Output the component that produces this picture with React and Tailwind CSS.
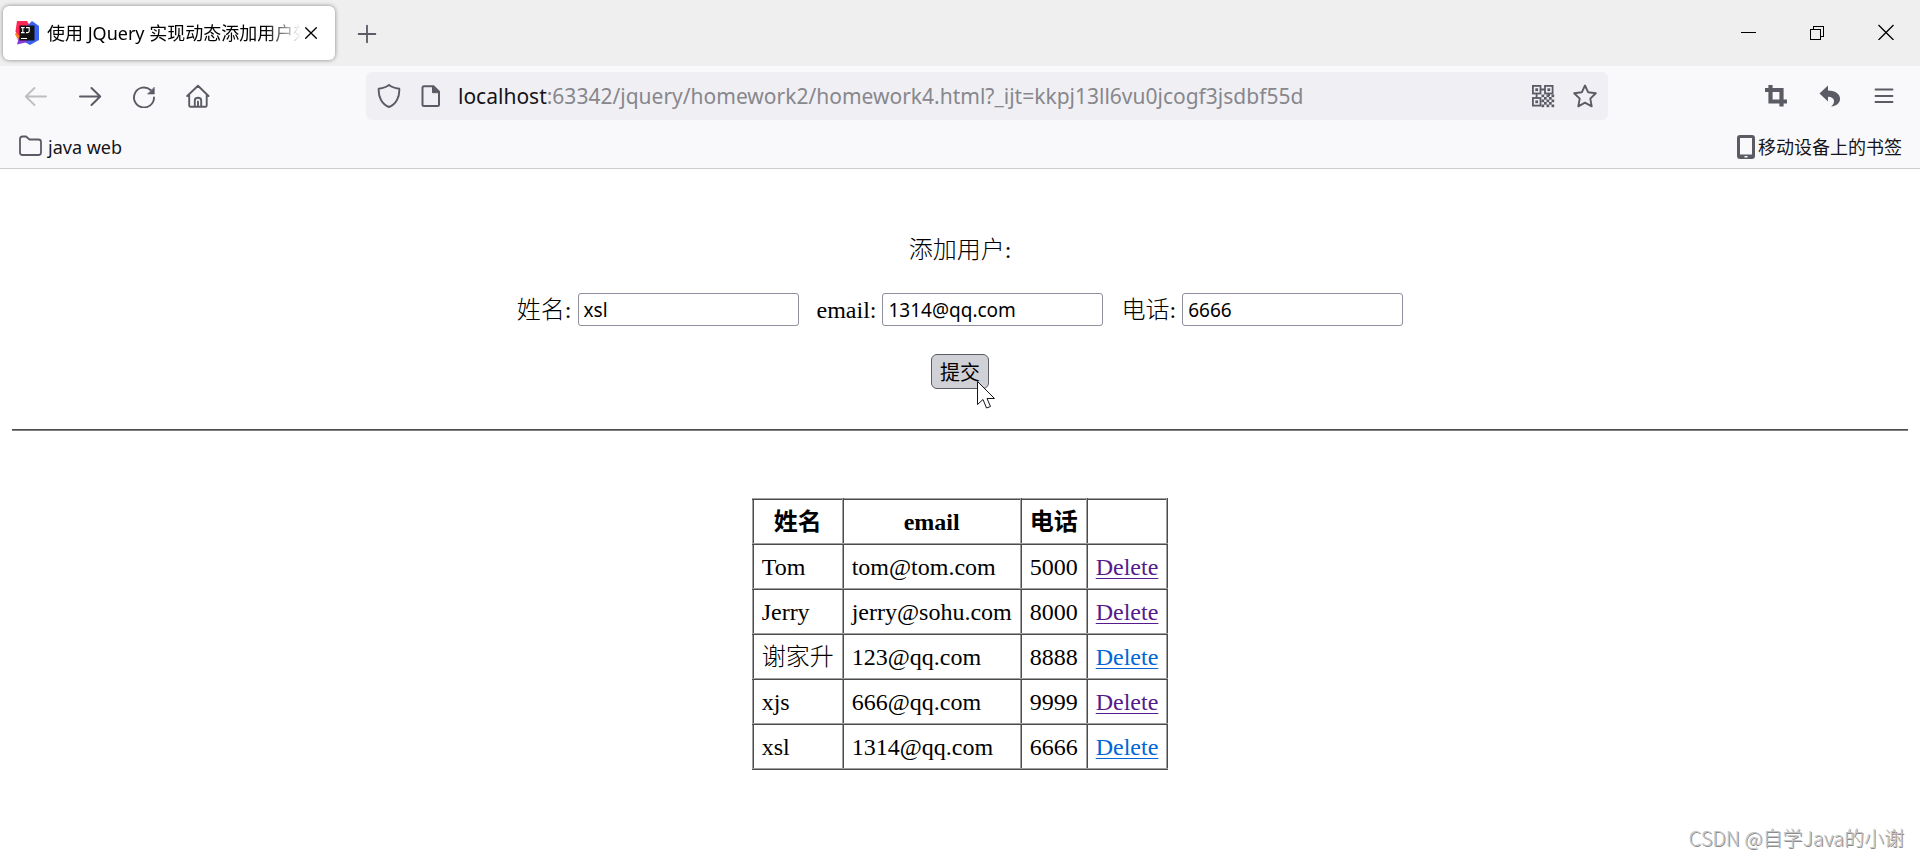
import React from "react";

const USERS = [
  { name: "Tom", email: "tom@tom.com", phone: "5000", visited: true },
  { name: "Jerry", email: "jerry@sohu.com", phone: "8000", visited: true },
  { name: "谢家升", email: "123@qq.com", phone: "8888", visited: false },
  { name: "xjs", email: "666@qq.com", phone: "9999", visited: true },
  { name: "xsl", email: "1314@qq.com", phone: "6666", visited: false },
];

function IdeaLogo() {
  return (
    <svg className="h-6 w-6 shrink-0" viewBox="0 0 24 24" aria-hidden="true">
      <path d="M0 13 4 8 8 16 3 19Z" fill="#fc801d" />
      <path d="M2 0H12L15 5 12 14 3 14 0.5 10.5Z" fill="#fe2857" />
      <path d="M13 4 17 0 24 5V19L15 24 8 20Z" fill="#3b63f3" />
      <path d="M4 16 14 14 13 21 2 23.5Z" fill="#8a3bd8" />
      <rect x="4.5" y="4.5" width="15" height="15" fill="#111" />
      <path d="M6 6.6H9.6M6 11.6H9.6M7.8 6.6V11.6M11 6.6H14.2V10Q14.2 11.6 12.6 11.6H11" fill="none" stroke="#fff" strokeWidth="1.1" />
      <path d="M6 17.5H12" stroke="#fff" strokeWidth="1" />
    </svg>
  );
}

function Stroke({ d, className = "h-6 w-6", width = 1.6, children }) {
  return (
    <svg className={`${className} shrink-0`} viewBox="0 0 24 24" fill="none" stroke="currentColor" strokeWidth={width} strokeLinecap="round" strokeLinejoin="round" aria-hidden="true">
      <path d={d} />
      {children}
    </svg>
  );
}

function QrIcon() {
  const cells = [];
  for (let r = 0; r < 5; r++) {
    for (let c = 0; c < 5; c++) {
      if ((r + c) % 2 === 0) cells.push(<rect key={`${r}-${c}`} x={10.5 + c * 2.5} y={10.5 + r * 2.5} width="2.7" height="2.7" />);
    }
  }
  return (
    <svg className="h-6 w-6 shrink-0" viewBox="0 0 24 24" fill="currentColor" aria-hidden="true">
      <g fill="none" stroke="currentColor" strokeWidth="1.8">
        <rect x="1.9" y="1.9" width="7.6" height="7.6" />
        <rect x="14" y="1.9" width="7.6" height="7.6" />
        <rect x="1.9" y="14" width="7.6" height="7.6" />
        <path d="M9.4 5.5H14M5.6 9.4V14M18 9.4V12" />
      </g>
      <rect x="4.3" y="4.3" width="2.8" height="2.8" />
      <rect x="16.4" y="4.3" width="2.8" height="2.8" />
      <rect x="4.3" y="16.4" width="2.8" height="2.8" />
      {cells}
    </svg>
  );
}

function TitleBar() {
  return (
    <header className="flex h-[66px] items-start justify-between bg-[#efefef]">
      <div className="flex items-start pt-1.5 pl-[3px]">
        <div className="flex h-[54px] w-[332px] items-center rounded-md bg-white pr-3.5 pl-3 shadow-[0_0_4px_rgba(0,0,0,0.45)]">
          <IdeaLogo />
          <span className="ml-2 flex-1 overflow-hidden whitespace-nowrap text-lg text-black [mask-image:linear-gradient(to_left,transparent,black_36px)]">
            使用 JQuery 实现动态添加用户效果
          </span>
          <button aria-label="关闭标签页" className="flex h-6 w-5 items-center justify-center text-black">
            <Stroke className="h-4 w-4" width={2} d="M4 4 20 20M20 4 4 20" />
          </button>
        </div>
        <button aria-label="新建标签页" className="flex h-14 w-16 items-center justify-center text-[#5b5b66]">
          <Stroke className="h-5 w-5" width={2.2} d="M12 2V22M2 12H22" />
        </button>
      </div>
      <div className="flex h-16 text-black">
        <button aria-label="最小化" className="flex w-[69px] items-center justify-center">
          <svg className="h-4 w-4" viewBox="0 0 16 16" shapeRendering="crispEdges"><path d="M1 8.5H16" stroke="currentColor" /></svg>
        </button>
        <button aria-label="还原" className="flex w-[69px] items-center justify-center">
          <svg className="h-4 w-4" viewBox="0 0 16 16" fill="none" stroke="currentColor" shapeRendering="crispEdges">
            <rect x="1.5" y="5.5" width="10" height="10" />
            <path d="M4.5 5.5V2.5H14.5V12.5H11.5" />
          </svg>
        </button>
        <button aria-label="关闭" className="flex w-[69px] items-center justify-center">
          <svg className="h-4 w-4" viewBox="0 0 16 16"><path d="M.5 1 15.5 16M15.5 1 .5 16" stroke="currentColor" strokeWidth="1.3" /></svg>
        </button>
      </div>
    </header>
  );
}

const NAV_BUTTON = "flex h-12 w-[54px] items-center justify-center";

function NavBar() {
  return (
    <div className="flex h-[60px] items-center text-[#5b5b66]">
      <div className="flex w-[366px] pl-[9px]">
        <button aria-label="后退" disabled className={`${NAV_BUTTON} text-[#bdbdc2]`}>
          <Stroke width={1.8} d="M22 12.5H2M10.5 4 1.8 12.5 10.5 21" />
        </button>
        <button aria-label="前进" className={NAV_BUTTON}>
          <Stroke width={2} d="M2 12.5H22M13.5 4 22.2 12.5 13.5 21" />
        </button>
        <button aria-label="刷新" className={NAV_BUTTON}>
          <Stroke width={1.9} d="M22 13.5A10 10 0 1 1 18.6 6">
            <path d="M22.3 3.5V10H15.8Z" fill="currentColor" strokeWidth="0.6" />
          </Stroke>
        </button>
        <button aria-label="主页" className={NAV_BUTTON}>
          <Stroke width={1.9} d="M1.2 12 12 1.8 22.5 12M3.2 10.5V21.5Q3.2 22.8 4.7 22.8H19.2Q20.7 22.8 20.7 21.5V10.5M8.8 22.5V16.5Q8.8 13.8 12 13.8Q15.2 13.8 15.2 16.5V22.5M12 17.5V22.5" />
        </button>
      </div>
      <div className="flex h-12 flex-1 items-center rounded-md bg-[#f0f0f4] pr-2.5 pl-[11px]">
        <Stroke width={1.9} d="M12 .9C9.5 3.3 5.5 4.3 1.7 4.8C1.2 13 5 20.5 12 23C19 20.5 22.8 13 22.3 4.8C18.5 4.3 14.5 3.3 12 .9Z" />
        <svg className="ml-[18px] h-6 w-6" viewBox="0 0 24 24" fill="none" stroke="currentColor" strokeWidth="2" aria-hidden="true">
          <path d="M5 2.2H14.5L20 7.7V20.5Q20 22 18.5 22H5Q3.5 22 3.5 20.5V3.7Q3.5 2.2 5 2.2Z" />
          <path d="M13.5 2.2V8.7H20Z" fill="currentColor" strokeWidth="1" />
        </svg>
        <p className="ml-[15px] flex-1 text-[21px] leading-8 whitespace-nowrap text-[#87878c]">
          <span className="text-[#15141a]">localhost</span>:63342/jquery/homework2/homework4.html?_ijt=kkpj13ll6vu0jcogf3jsdbf55d
        </p>
        <button aria-label="二维码" className="flex w-[59px] justify-center"><QrIcon /></button>
        <button aria-label="添加书签" className="flex w-[26px] justify-center">
          <Stroke width={1.9} d="M12 1.5 15.2 8.3 22.8 9.2 17.3 14.6 18.7 22.3 12 18.6 5.3 22.3 6.7 14.6 1.2 9.2 8.8 8.3Z" />
        </button>
      </div>
      <div className="flex w-[312px] justify-end pr-[9px]">
        <button aria-label="截图" className={NAV_BUTTON}>
          <svg className="h-6 w-6" viewBox="0 0 24 24" fill="none" stroke="currentColor" strokeWidth="4.2"><path d="M6.500 1V17.500H23M1 6H17.500V22.500" /></svg>
        </button>
        <button aria-label="撤销" className={NAV_BUTTON}>
          <svg className="h-6 w-6" viewBox="0 0 24 24" fill="currentColor"><path d="M1.5 9.5 10 1.5V6.5C18 6.5 22.5 10.5 22 15.5C21.7 19 18.5 22 13 22.5C17.5 19.5 17.5 13 10 12.8V17.5Z" /></svg>
        </button>
        <button aria-label="菜单" className={NAV_BUTTON}>
          <Stroke width={1.9} d="M3.5 5.5H20.5M3.5 12H20.5M3.5 18H20.5" />
        </button>
      </div>
    </div>
  );
}

function BookmarkBar() {
  return (
    <nav className="flex h-[42px] items-start justify-between px-[18px] text-lg leading-[42px] text-[#15141a]">
      <a href="#java-web" className="flex items-center gap-1.5">
        <span className="text-[#5b5b66]">
          <Stroke width={1.8} d="M2 4Q2 1.5 4.5 1.5H8L11.5 4.5H20.5Q23 4.5 23 7V17.5Q23 20 20.5 20H4.5Q2 20 2 17.5Z" />
        </span>
        java web
      </a>
      <a href="#mobile" className="flex items-center">
        <svg className="h-6 w-[22px] text-[#5b5b66]" viewBox="0 0 22 24" fill="currentColor" aria-hidden="true">
          <path fillRule="evenodd" d="M4 0H16Q19 0 19 3V21Q19 24 16 24H4Q1 24 1 21V3Q1 0 4 0ZM4 3V19.5H16V3ZM8.5 21V22.5H11.5V21Z" />
        </svg>
        移动设备上的书签
      </a>
    </nav>
  );
}

function Field({ id, label, value }) {
  return (
    <div className="flex items-center gap-1.5">
      <label htmlFor={id}>{label}:</label>
      <input id={id} defaultValue={value} className="h-[33px] w-[221px] rounded-[3px] border border-[#8f8f9d] bg-white px-[5px] font-['Noto_Sans','Noto_Sans_CJK_SC',sans-serif] text-[19px] leading-6 font-normal text-black" />
    </div>
  );
}

const CELL = "h-[45px] border-2 [border-style:ridge] border-[#a0a0a0] px-2 py-0";

export default function App() {
  return (
    <div className="bg-white font-['Noto_Sans','Noto_Sans_CJK_SC',sans-serif]">
      <TitleBar />
      <div className="border-b border-[#ccc] bg-[#f9f9fb]">
        <NavBar />
        <BookmarkBar />
      </div>
      <main className="px-3 pt-[66px] font-['Liberation_Serif','Noto_Sans_CJK_SC',serif] text-2xl leading-[30px] font-light text-black">
        <form className="flex flex-col items-center" onSubmit={(e) => e.preventDefault()}>
          <p>添加用户:</p>
          <div className="mt-7 flex gap-[18px]">
            <Field id="name" label="姓名" value="xsl" />
            <Field id="email" label="email" value="1314@qq.com" />
            <Field id="phone" label="电话" value="6666" />
          </div>
          <div className="relative mt-7">
            <button type="submit" className="h-[35px] w-[58px] rounded-md border border-[#5b5b66] bg-[#d0d0d7] font-['Noto_Sans_CJK_SC',sans-serif] text-xl leading-8 font-normal">
              提交
            </button>
            <svg className="absolute top-[27px] left-[46px] h-7 w-5" viewBox="0 0 20 28" aria-hidden="true">
              <path d="M.5 .5V23.5L6 18.5L9.5 27L13.5 25.5L10 17.5H17.5Z" fill="#fff" stroke="#15141a" />
            </svg>
          </div>
        </form>
        <hr className="mt-10 h-0.5 border-0 border-t border-b border-t-[#4d4d4d] border-b-[#808080]" />
        <table className="mx-auto mt-[67px] border-collapse">
          <thead>
            <tr>
              <th className={CELL}>姓名</th>
              <th className={CELL}>email</th>
              <th className={CELL}>电话</th>
              <th className={CELL} aria-label="操作"></th>
            </tr>
          </thead>
          <tbody>
            {USERS.map((u) => (
              <tr key={u.name}>
                <td className={CELL}>{u.name}</td>
                <td className={CELL}>{u.email}</td>
                <td className={CELL}>{u.phone}</td>
                <td className={CELL}>
                  <a href="#delete" className={`underline decoration-1 underline-offset-[3px] ${u.visited ? "text-[#551a8b]" : "text-[#0066d6]"}`}>Delete</a>
                </td>
              </tr>
            ))}
          </tbody>
        </table>
      </main>
      <footer className="mt-12 flex justify-end pr-4 font-['Noto_Sans_CJK_SC',sans-serif] text-xl leading-10 font-light text-[#c4c4c4] [text-shadow:1px_1px_0_#8c8c8c]">
        CSDN @自学Java的小谢
      </footer>
    </div>
  );
}
